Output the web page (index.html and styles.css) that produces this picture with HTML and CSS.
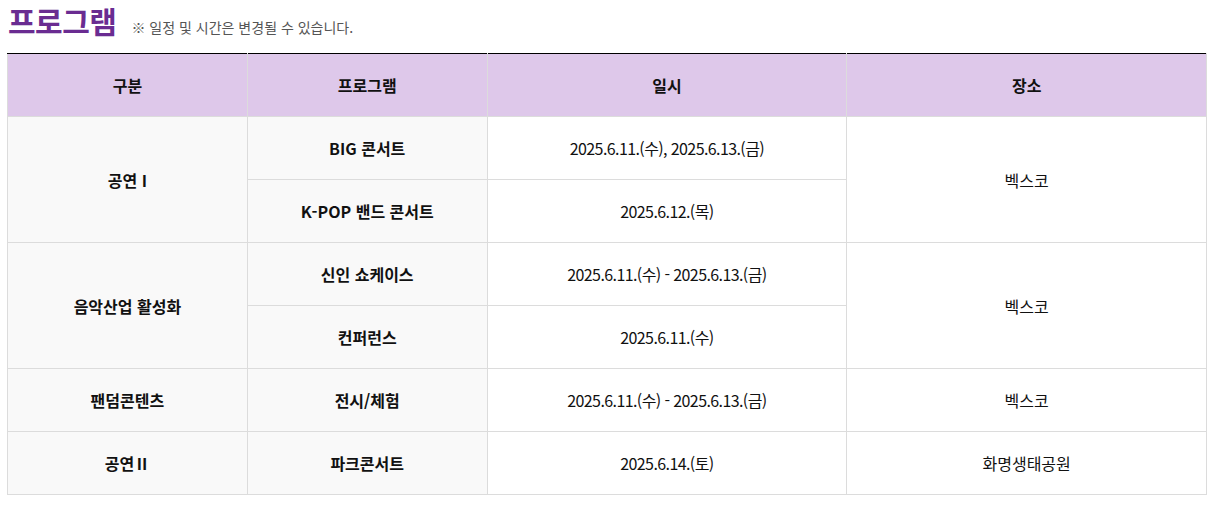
FILE: index.html
```html
<!DOCTYPE html>
<html lang="ko">
<head>
<meta charset="utf-8">
<link rel="stylesheet" href="styles.css">
</head>
<body>
<div class="wrap">
  <div class="heading">
    <h2 class="title">프로그램</h2>
    <span class="note">※ 일정 및 시간은 변경될 수 있습니다.</span>
  </div>
  <table class="tbl">
    <colgroup>
      <col class="c1"><col class="c2"><col class="c3"><col class="c4">
    </colgroup>
    <thead>
      <tr><th>구분</th><th>프로그램</th><th>일시</th><th>장소</th></tr>
    </thead>
    <tbody>
      <tr>
        <td class="cat" rowspan="2">공연 I</td>
        <td class="prog">BIG 콘서트</td>
        <td class="date">2025.6.11.(수), 2025.6.13.(금)</td>
        <td rowspan="2">벡스코</td>
      </tr>
      <tr>
        <td class="prog">K-POP 밴드 콘서트</td>
        <td class="date">2025.6.12.(목)</td>
      </tr>
      <tr>
        <td class="cat" rowspan="2">음악산업 활성화</td>
        <td class="prog">신인 쇼케이스</td>
        <td class="date">2025.6.11.(수) - 2025.6.13.(금)</td>
        <td rowspan="2">벡스코</td>
      </tr>
      <tr>
        <td class="prog">컨퍼런스</td>
        <td class="date">2025.6.11.(수)</td>
      </tr>
      <tr>
        <td class="cat">팬덤콘텐츠</td>
        <td class="prog">전시/체험</td>
        <td class="date">2025.6.11.(수) - 2025.6.13.(금)</td>
        <td>벡스코</td>
      </tr>
      <tr>
        <td class="cat">공연Ⅱ</td>
        <td class="prog">파크콘서트</td>
        <td class="date">2025.6.14.(토)</td>
        <td>화명생태공원</td>
      </tr>
    </tbody>
  </table>
</div>
</body>
</html>
```

FILE: styles.css
```css
html, body {
  margin: 0;
  padding: 0;
  background: #fff;
}
body {
  font-family: "Noto Sans CJK KR", "Noto Sans", sans-serif;
  color: #111;
}
.wrap {
  padding: 0 12px 0 7px;
}
.heading {
  display: flex;
  align-items: baseline;
  gap: 15px;
  height: 53px;
  padding-left: 1px;
}
.title {
  margin: 0;
  font-size: 30px;
  font-weight: 700;
  color: #6a2c91;
  line-height: 40px;
  letter-spacing: -0.5px;
}
.note {
  font-size: 14px;
  color: #555;
}
.tbl {
  width: 100%;
  border-collapse: collapse;
  table-layout: fixed;
  border-top: 1px solid #000;
}
.c1, .c2 { width: 20%; }
.c3, .c4 { width: 30%; }
.tbl th, .tbl td {
  border: 1px solid #dcdcdc;
  text-align: center;
  vertical-align: middle;
  font-size: 16px;
  padding: 0;
}
.tbl thead th {
  border-top: 1px solid #000;
  background: #dec8ea;
  height: 62px;
  font-weight: 700;
}
.tbl tbody td {
  height: 62px;
}
.tbl td.date {
  letter-spacing: -0.6px;
}
.tbl td.cat, .tbl td.prog {
  background: #f9f9f9;
  font-weight: 700;
}
```
